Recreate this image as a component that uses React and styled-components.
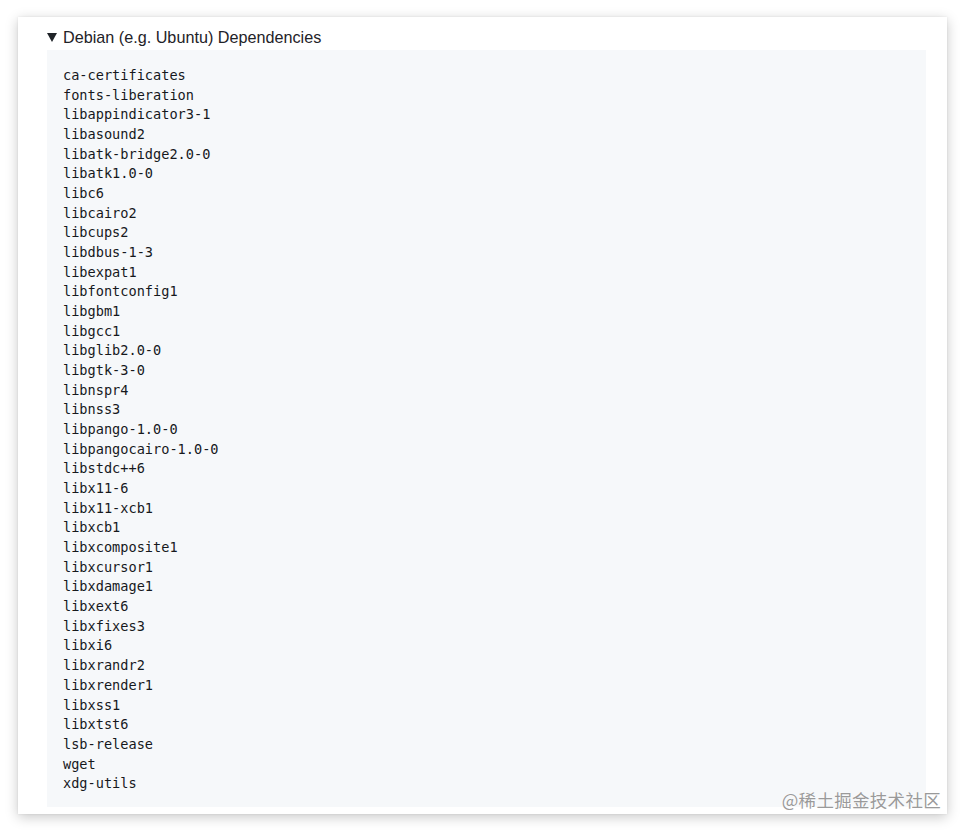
import styled, { createGlobalStyle } from "styled-components";

const GlobalStyle = createGlobalStyle`
  html, body {
    margin: 0;
    padding: 0;
    background: #ffffff;
  }
  body {
    font-family: "Liberation Sans", Arial, sans-serif;
    color: #24292f;
  }
`;

const Page = styled.div`
  padding: 17px 18px 21px 18px;
`;

const Card = styled.div`
  position: relative;
  box-sizing: border-box;
  width: 929px;
  height: 797px;
  background: #ffffff;
  padding: 8px 21px 7px 29px;
  box-shadow: 0 3px 12px rgba(0, 0, 0, 0.22), 0 0 2px rgba(0, 0, 0, 0.08);
`;

const Details = styled.details`
  margin: 0;
`;

const Summary = styled.summary`
  display: flex;
  align-items: center;
  gap: 6px;
  list-style: none;
  font-size: 16.2px;
  line-height: 25px;
  color: #1f2328;
  cursor: pointer;
  &::-webkit-details-marker {
    display: none;
  }
`;

const Marker = styled.span`
  width: 0;
  height: 0;
  border-left: 5px solid transparent;
  border-right: 5px solid transparent;
  border-top: 9px solid #1f2328;
`;

const Code = styled.pre`
  margin: 0;
  box-sizing: border-box;
  height: 757px;
  padding: 16px 16px 14px 16px;
  background: #f6f8fa;
  font-family: "DejaVu Sans Mono", "Liberation Mono", monospace;
  font-size: 13.6px;
  line-height: 19.67px;
  color: #16191d;
  overflow: hidden;
`;

const Watermark = styled.span`
  position: absolute;
  right: 6px;
  bottom: 3px;
  font-family: "Noto Sans CJK SC", sans-serif;
  font-size: 17.5px;
  line-height: 22px;
  color: #9a9a9a;
  text-shadow: 0 0 2px #ffffff, 0 0 1px #ffffff;
  letter-spacing: 0.3px;
`;

const packages = [
  "ca-certificates",
  "fonts-liberation",
  "libappindicator3-1",
  "libasound2",
  "libatk-bridge2.0-0",
  "libatk1.0-0",
  "libc6",
  "libcairo2",
  "libcups2",
  "libdbus-1-3",
  "libexpat1",
  "libfontconfig1",
  "libgbm1",
  "libgcc1",
  "libglib2.0-0",
  "libgtk-3-0",
  "libnspr4",
  "libnss3",
  "libpango-1.0-0",
  "libpangocairo-1.0-0",
  "libstdc++6",
  "libx11-6",
  "libx11-xcb1",
  "libxcb1",
  "libxcomposite1",
  "libxcursor1",
  "libxdamage1",
  "libxext6",
  "libxfixes3",
  "libxi6",
  "libxrandr2",
  "libxrender1",
  "libxss1",
  "libxtst6",
  "lsb-release",
  "wget",
  "xdg-utils",
];

function App() {
  return (
    <>
      <GlobalStyle />
      <Page>
        <Card>
          <Details open>
            <Summary>
              <Marker />
              Debian (e.g. Ubuntu) Dependencies
            </Summary>
            <Code>{packages.join("\n")}</Code>
          </Details>
          <Watermark>@稀土掘金技术社区</Watermark>
        </Card>
      </Page>
    </>
  );
}

export default App;
